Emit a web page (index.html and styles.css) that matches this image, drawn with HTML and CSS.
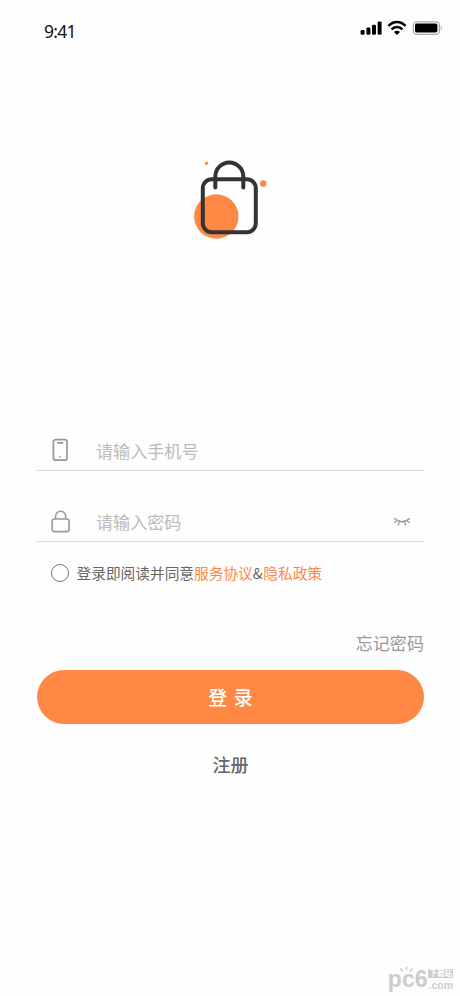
FILE: index.html
```
<!DOCTYPE html>
<html lang="zh-CN">
<head>
<meta charset="utf-8">
<title>登录</title>
<link rel="stylesheet" href="styles.css">
</head>
<body>
<header class="status">
  <span class="time">9:41</span>
  <svg class="status-icons" width="84" height="18" viewBox="0 0 84 18">
    <rect x=".6" y="10" width="4" height="4.800" rx="1.300"/>
    <rect x="6.400" y="7.400" width="4" height="7.400" rx="1.300"/>
    <rect x="12" y="4.800" width="4" height="10" rx="1.300"/>
    <rect x="17.600" y="1.500" width="4" height="13.300" rx="1.300"/>
    <g fill="none" stroke="#000" stroke-width="2.500">
      <path d="M28.400 6C33.400 .6 40.600 .6 45.600 6"/>
      <path d="M31.500 9.400C34.700 6.200 39.300 6.200 42.500 9.400"/>
    </g>
    <path d="M34 12Q37 9.400 40 12L37 15Z"/>
    <rect x="53.400" y="1.800" width="26" height="12.600" rx="3.600" fill="none" stroke="#aaa" stroke-width="1.300"/>
    <rect x="55" y="3.600" width="22.400" height="9" rx="1.800"/>
    <path d="M80.800 6Q82.800 8.100 80.800 10.200Z" fill="#999"/>
  </svg>
</header>
<main class="login">
  <svg class="logo" width="90" height="100" viewBox="0 0 90 100">
    <g fill="#ff8844">
      <circle cx="31.300" cy="66.500" r="22.200"/>
      <circle cx="21.500" cy="13.200" r="1.700"/>
      <circle cx="78.200" cy="33.500" r="3.200"/>
    </g>
    <g fill="none" stroke="#333" stroke-width="4" stroke-linecap="round">
      <rect x="17.800" y="29.200" width="53" height="53" rx="9"/>
      <path d="M30.300 37.500V26.500a14 14 0 0 1 28 0V37.500"/>
    </g>
  </svg>
  <div class="field">
    <svg width="24" height="26" viewBox="0 0 24 26" fill="none" stroke="#999" stroke-width="1.700" stroke-linecap="round">
      <rect x="5.400" y="2.600" width="13.600" height="20.600" rx="2.300"/>
      <path d="M9.700 5.800h5M12.200 19.600v.1"/>
    </svg>
    <span class="placeholder">请输入手机号</span>
  </div>
  <div class="field">
    <svg width="24" height="26" viewBox="0 0 24 26" fill="none" stroke="#999" stroke-width="1.600">
      <rect x="4.100" y="11" width="17" height="12.600" rx="2.300"/>
      <path d="M7.600 11V8.300a5 5 0 0 1 10 0V11"/>
    </svg>
    <span class="placeholder">请输入密码</span>
    <svg class="eye" width="18" height="12" viewBox="0 0 18 12" fill="none" stroke="#999" stroke-width="1.300" stroke-linecap="round">
      <path d="M1.500 2.500Q9 9 16.500 2.500M1.500 6.500L4.300 4.700M16.500 6.500L13.700 4.700M6.500 6L5.300 9M11.500 6L12.700 9"/>
    </svg>
  </div>
  <div class="agreement">
    <span class="radio"></span>
    <span>登录即阅读并同意<a>服务协议</a><span class="amp">&amp;</span><a>隐私政策</a></span>
  </div>
  <div class="forgot">忘记密码</div>
  <div class="submit">登 录</div>
  <div class="register">注册</div>
</main>
<footer class="mark">
  <span class="mark-name">pc6
    <svg class="rays" width="16" height="6" viewBox="0 0 16 6" fill="none" stroke="#ccc" stroke-width="1.600" stroke-linecap="round">
      <path d="M2 3L3.500 5M7.500 1V3.500M13 3L11.500 5"/>
    </svg>
  </span>
  <span class="mark-side"><span class="mark-tag">下载站</span><span class="mark-com">.com</span></span>
</footer>
</body>
</html>
```
FILE: styles.css
```
* { box-sizing: border-box; }
body {
  margin: 0;
  height: 996px;
  display: flex;
  flex-direction: column;
  overflow: hidden;
  background: #fefefe;
  font-family: "Noto Sans CJK SC", sans-serif;
}
.status {
  height: 60px;
  padding: 20px 16px 0 44px;
  display: flex;
  justify-content: space-between;
  align-items: flex-start;
}
.time { font: 17.500px/24px "Noto Sans", sans-serif; letter-spacing: -.7px; margin-top: -1px; color: #111; }
.status-icons { display: block; }
.login {
  flex: 1;
  padding: 90px 36px 0;
  display: flex;
  flex-direction: column;
}
.logo { display: block; margin: 0 0 179px 149px; }
.field {
  height: 42px;
  padding: 0 13px 0 12px;
  margin-bottom: 29px;
  display: flex;
  align-items: flex-start;
  border-bottom: 1px solid #ddd;
}
.field > svg { margin-top: 8px; flex: none; }
.placeholder { flex: 1; margin-left: 24px; font-size: 17.100px; line-height: 44px; color: #bbb; }
.field > .eye { margin-top: 16px; }
.agreement {
  margin-top: -8px;
  padding-left: 15px;
  height: 20px;
  display: flex;
  align-items: center;
  gap: 7.500px;
  font-size: 14.700px;
  line-height: 20px;
  color: #666;
  white-space: nowrap;
}
.agreement a { color: #ff8844; }
.amp { margin-right: .5px; }
.radio { width: 18px; height: 18px; border: 1.500px solid #777; border-radius: 50%; }
.forgot { margin-top: 47px; height: 26px; text-align: right; font-size: 17.100px; line-height: 26px; color: #999; }
.submit {
  margin: 14px 0 0 1px;
  height: 54px;
  border-radius: 27px;
  background: #ff8844;
  color: #fff;
  text-align: center;
  font-size: 19px;
  font-weight: 500;
  line-height: 54px;
  word-spacing: 2px;
}
.register { margin: 26px 0 0 1px; text-align: center; font-size: 18px; font-weight: 500; line-height: 28px; color: #666; }
.mark {
  height: 32px;
  padding-right: 7px;
  display: flex;
  justify-content: flex-end;
  gap: 1px;
  color: #ccc;
  font-family: "Liberation Sans", "Noto Sans CJK SC", sans-serif;
  font-weight: bold;
}
.mark-name { position: relative; font-size: 23px; line-height: 30px; }
.rays { position: absolute; left: 11px; top: 2px; }
.mark-side { display: flex; flex-direction: column; padding-top: 5px; }
.mark-tag { height: 9px; background: #ccc; color: #fff; font-size: 7.500px; line-height: 9px; text-align: center; }
.mark-com { margin-top: 2px; font-size: 10.500px; line-height: 10px; }
```
